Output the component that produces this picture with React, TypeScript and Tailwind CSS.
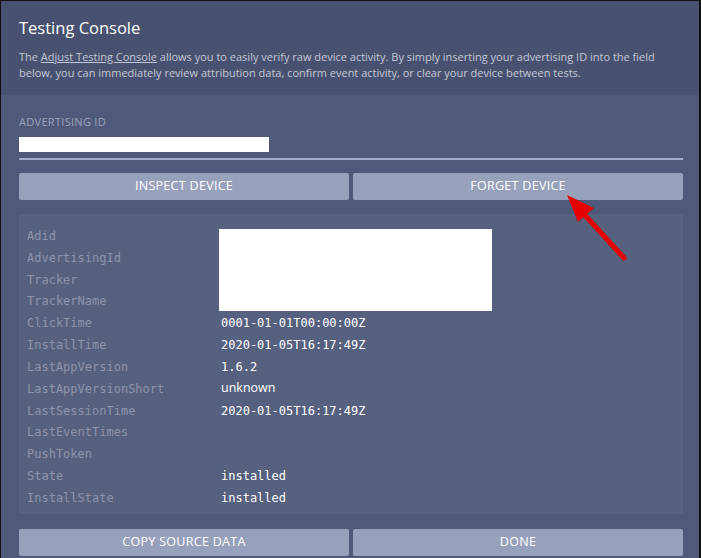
import React from "react";

const rows: { label: string; value?: string; sans?: boolean }[] = [
  { label: "Adid" },
  { label: "AdvertisingId" },
  { label: "Tracker" },
  { label: "TrackerName" },
  { label: "ClickTime", value: "0001-01-01T00:00:00Z" },
  { label: "InstallTime", value: "2020-01-05T16:17:49Z" },
  { label: "LastAppVersion", value: "1.6.2" },
  { label: "LastAppVersionShort", value: "unknown", sans: true },
  { label: "LastSessionTime", value: "2020-01-05T16:17:49Z" },
  { label: "LastEventTimes" },
  { label: "PushToken" },
  { label: "State", value: "installed" },
  { label: "InstallState", value: "installed" },
];

function Btn({ children }: { children: React.ReactNode }) {
  return (
    <button className="h-[27px] flex-1 rounded-[2px] bg-[#98a1bc] text-[12.5px] tracking-[0.3px] text-white">
      {children}
    </button>
  );
}

export default function App() {
  return (
    <div className="relative h-[558px] w-[701px] overflow-hidden bg-[#111] font-['Open_Sans',sans-serif]">
      <div className="mt-px ml-px mr-[2px] flex h-[557px] flex-col bg-[#4f5a7b]">
        {/* Header */}
        <div className="h-[94px] shrink-0 bg-[#48516f] pl-[18px] pr-[16px] pt-[16px]">
          <h1 className="text-[16.5px] leading-[22px] text-white">Testing Console</h1>
          <p className="mt-[10px] text-[11px] leading-[16px] text-[#c3c8d8]">
            The <span className="underline">Adjust Testing Console</span> allows you to easily verify raw device activity. By
            simply inserting your advertising ID into the field below, you can immediately review attribution data, confirm
            event activity, or clear your device between tests.
          </p>
        </div>

        {/* Body */}
        <div className="flex flex-col pl-[18px] pr-[16px] pt-[20px]">
          <div className="text-[11px] leading-[14px] tracking-[0.3px] text-[#9ba2ba]">ADVERTISING ID</div>
          <div className="mt-[8px] h-[15px] w-[250px] bg-white" />
          <div className="mt-[6px] h-[2px] bg-[#a3abc9]" />

          <div className="mt-[13px] flex gap-[4px]">
            <Btn>INSPECT DEVICE</Btn>
            <Btn>FORGET DEVICE</Btn>
          </div>

          <div className="relative mt-[14px] bg-[#56617f] px-[8px] pt-[11px] pb-[5px] font-['DejaVu_Sans_Mono',monospace] text-[12px]">
            {rows.map((r) => (
              <div key={r.label} className="flex h-[21.84px] items-center">
                <span className="w-[194px] text-[#8c93ab]">{r.label}</span>
                {r.value && (
                  <span className={r.sans ? "font-['Open_Sans',sans-serif] text-[12.5px] text-white" : "text-white"}>
                    {r.value}
                  </span>
                )}
              </div>
            ))}
            <div className="absolute top-[15px] left-[200px] h-[82px] w-[273px] bg-white" />
          </div>

          <div className="mt-[15px] flex gap-[4px]">
            <Btn>COPY SOURCE DATA</Btn>
            <Btn>DONE</Btn>
          </div>
        </div>
      </div>

      {/* Red annotation arrow */}
      <svg className="absolute top-0 left-0" width="701" height="558" viewBox="0 0 701 558">
        <line x1="624" y1="258" x2="582" y2="212" stroke="#e60000" strokeWidth="5" strokeLinecap="round" />
        <polygon points="567,195 594,208 578,222" fill="#e60000" />
      </svg>
    </div>
  );
}
